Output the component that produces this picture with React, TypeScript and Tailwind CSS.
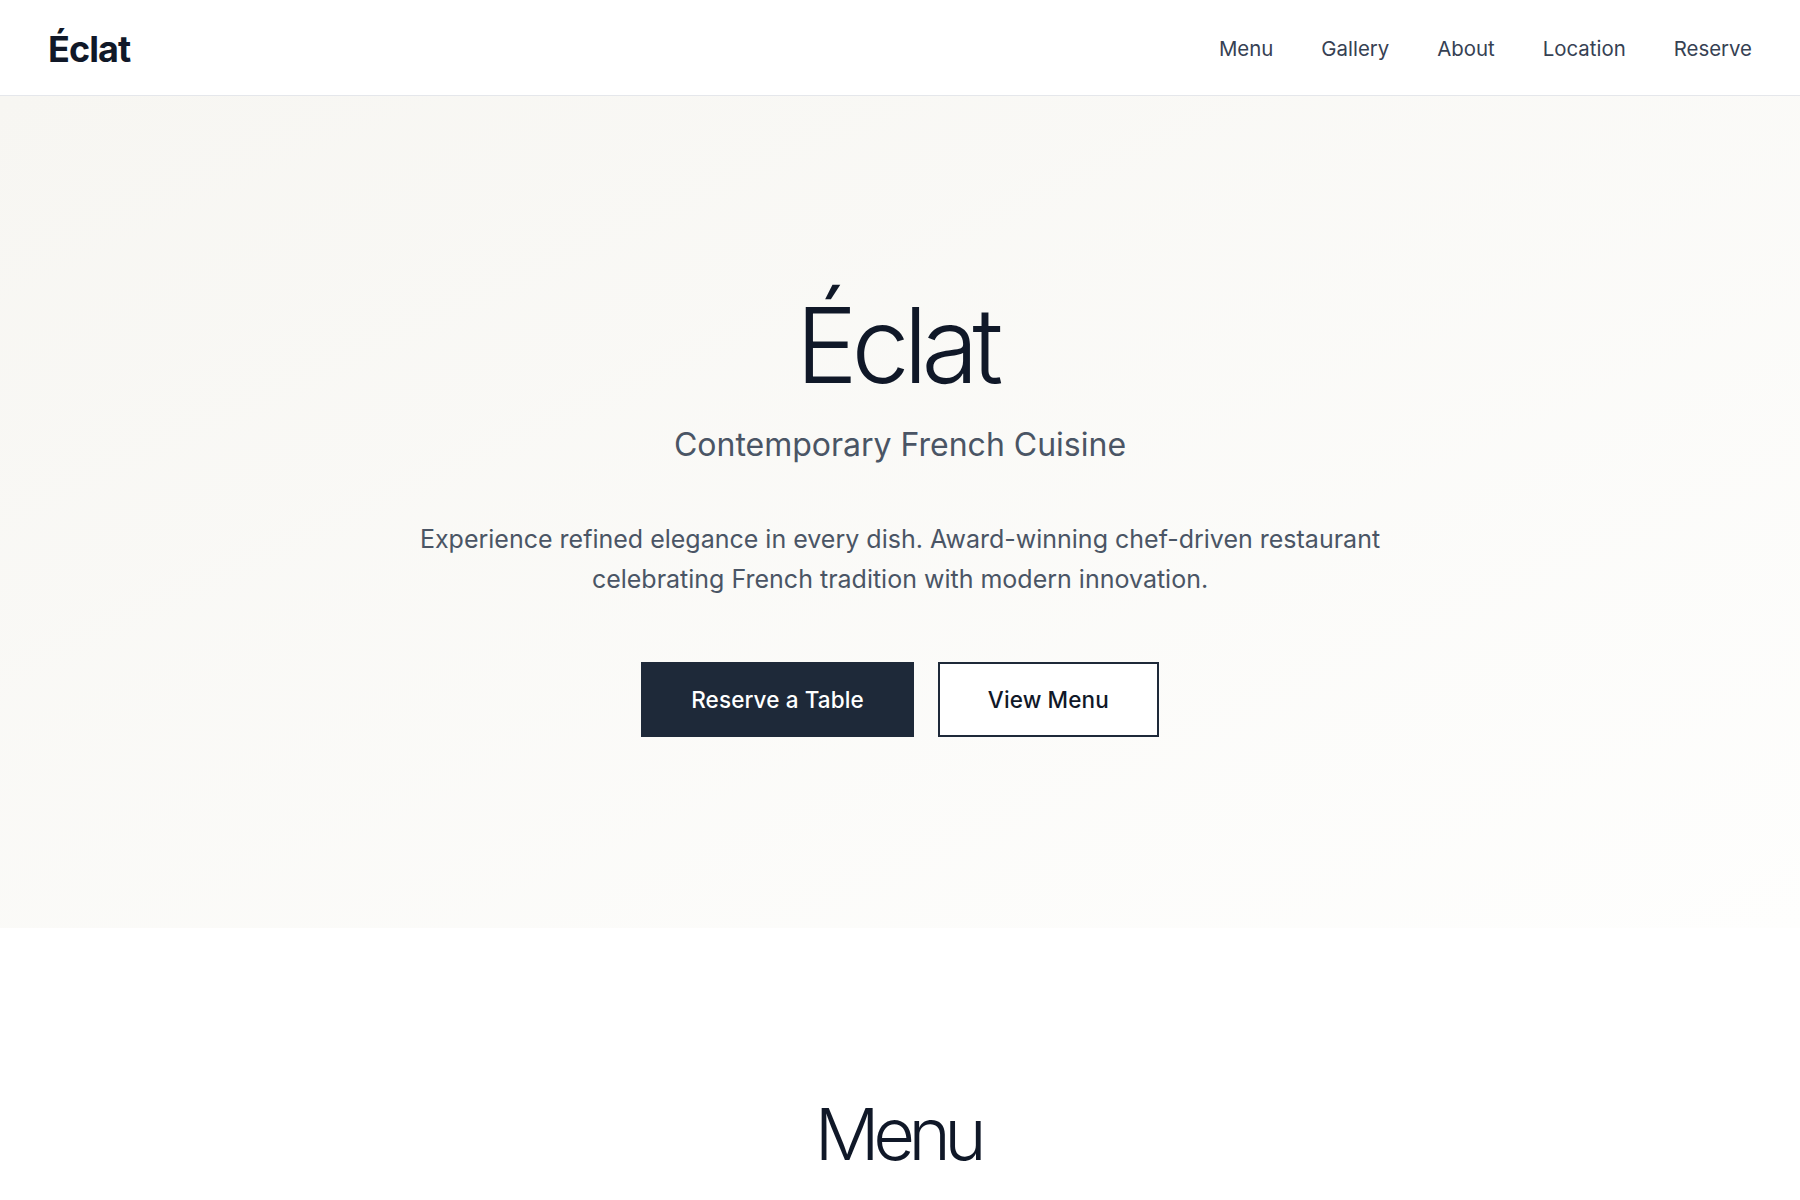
import React from "react";

export default function App() {
  const links = ["Menu", "Gallery", "About", "Location", "Reserve"];
  return (
    <div className="min-h-screen bg-white text-gray-900" style={{ fontFamily: "Inter, 'Noto Sans', sans-serif" }}>
      <header className="h-24 bg-white border-b border-gray-200 px-12 flex items-center justify-between">
        <div className="mt-[2px] text-4xl font-bold tracking-tight text-gray-900">Éclat</div>
        <nav className="mt-[4px] flex items-center gap-12">
          {links.map((l) => (
            <a key={l} className="text-[20.4px] text-gray-700">
              {l}
            </a>
          ))}
        </nav>
      </header>

      <section className="h-[832px] pt-[197px] bg-linear-to-br from-[#f7f6f2] to-[#fefefd] flex flex-col items-center text-center">
        <h1 className="-ml-[7px] text-[104px] leading-none font-light tracking-[-0.06em] text-gray-900">Éclat</h1>
        <p className="mt-7 text-[32px] leading-10 text-gray-600">Contemporary French Cuisine</p>
        <p className="mt-[54px] max-w-5xl text-[25px] leading-10 text-gray-600">
          Experience refined elegance in every dish. Award-winning chef-driven restaurant celebrating French tradition with modern innovation.
        </p>
        <div className="mt-[63px] flex items-center gap-6">
          <button className="h-[75px] px-12 inline-flex items-center bg-gray-800 border-2 border-gray-800 text-white text-[22.5px] tracking-[0.005em] font-medium">
            Reserve a Table
          </button>
          <button className="h-[75px] px-12 inline-flex items-center bg-white border-2 border-gray-800 text-gray-900 text-[22.5px] tracking-[0.005em] font-medium">
            View Menu
          </button>
        </div>
      </section>

      <section className="bg-white pt-[170px] pb-24 flex flex-col items-center">
        <h2 className="-ml-[5px] text-7xl leading-none font-light tracking-[-0.09em] text-gray-900">Menu</h2>
      </section>
    </div>
  );
}
